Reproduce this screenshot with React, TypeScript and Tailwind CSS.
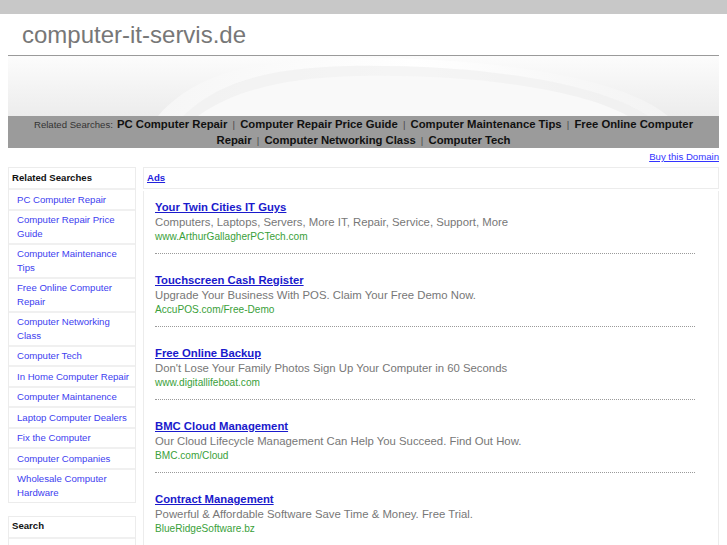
import React from "react";

const topLinks = [
  "PC Computer Repair",
  "Computer Repair Price Guide",
  "Computer Maintenance Tips",
  "Free Online Computer Repair",
  "Computer Networking Class",
  "Computer Tech",
];

const sideLinks = [
  "PC Computer Repair",
  "Computer Repair Price Guide",
  "Computer Maintenance Tips",
  "Free Online Computer Repair",
  "Computer Networking Class",
  "Computer Tech",
  "In Home Computer Repair",
  "Computer Maintanence",
  "Laptop Computer Dealers",
  "Fix the Computer",
  "Computer Companies",
  "Wholesale Computer Hardware",
];

const ads = [
  {
    title: "Your Twin Cities IT Guys",
    desc: "Computers, Laptops, Servers, More IT, Repair, Service, Support, More",
    url: "www.ArthurGallagherPCTech.com",
  },
  {
    title: "Touchscreen Cash Register",
    desc: "Upgrade Your Business With POS. Claim Your Free Demo Now.",
    url: "AccuPOS.com/Free-Demo",
  },
  {
    title: "Free Online Backup",
    desc: "Don't Lose Your Family Photos Sign Up Your Computer in 60 Seconds",
    url: "www.digitallifeboat.com",
  },
  {
    title: "BMC Cloud Management",
    desc: "Our Cloud Lifecycle Management Can Help You Succeed. Find Out How.",
    url: "BMC.com/Cloud",
  },
  {
    title: "Contract Management",
    desc: "Powerful & Affordable Software Save Time & Money. Free Trial.",
    url: "BlueRidgeSoftware.bz",
  },
];

function Banner() {
  return (
    <div className="h-[60px] bg-[#f3f3f3]">
      <svg width="100%" height="60" viewBox="0 0 711 60" preserveAspectRatio="none">
        <defs>
          <linearGradient id="bg" x1="0" y1="0" x2="0" y2="1">
            <stop offset="0" stopColor="#fcfcfc" />
            <stop offset="1" stopColor="#ececec" />
          </linearGradient>
          <linearGradient id="arc" x1="0" y1="0" x2="1" y2="0">
            <stop offset="0" stopColor="#f6f6f6" />
            <stop offset="0.5" stopColor="#ffffff" />
            <stop offset="1" stopColor="#f3f3f3" />
          </linearGradient>
        </defs>
        <rect width="711" height="60" fill="url(#bg)" />
        <path d="M150 60 C185 20 240 4 330 2 C470 0 610 18 660 60 Z" fill="url(#arc)" />
        <path d="M175 60 C210 26 260 12 340 10 C470 8 590 26 640 60 Z" fill="#efefef" opacity="0.6" />
        <path d="M190 60 C230 32 280 22 350 20 C460 18 570 32 620 60 Z" fill="#f9f9f9" />
      </svg>
    </div>
  );
}

export default function App() {
  return (
    <div className="min-h-screen bg-white font-['Liberation_Sans',Arial,sans-serif]">
      <div className="h-[14px] bg-[#c8c8c8]" />
      <div className="mx-2">
        {/* Header */}
        <div className="flex h-[42px] items-center border-b border-[#9a9a9a] pl-[14px] text-[24px] text-[#777]">
          computer-it-servis.de
        </div>
        <Banner />

        {/* Related searches bar */}
        <div className="h-[32px] overflow-hidden bg-[#9b9b9b] px-[16px] text-center text-[11.3px] leading-[16px] text-[#111]">
          <span className="mr-[4px] text-[9.6px] leading-none text-[#333]">Related Searches:</span>
          {topLinks.map((l, i) => (
            <React.Fragment key={l}>
              <a href="#" className="font-bold">
                {l}
              </a>
              {i < topLinks.length - 1 && (
                <>
                  {" "}
                  <span className="mx-[2px] text-[9.6px] leading-none text-[#4a4a4a]">|</span>{" "}
                </>
              )}
            </React.Fragment>
          ))}
        </div>

        <div className="mt-[3px] mb-[4px] text-right text-[9.6px] leading-[12px]">
          <a href="#" className="text-[#3333ff] underline">
            Buy this Domain
          </a>
        </div>

        <div className="flex gap-[7px]">
          {/* Sidebar */}
          <div className="w-[128px] shrink-0">
            <div className="border border-[#ececec]">
              <div className="flex h-[20px] items-center pl-[3px] text-[9.6px] font-bold text-[#111]">
                Related Searches
              </div>
              {sideLinks.map((l) => (
                <div
                  key={l}
                  className="border-t-2 border-[#f0f0f0] py-[2.5px] pl-[8px] pr-1 text-[9.6px] leading-[13.5px] text-[#4040f0]"
                >
                  {l}
                </div>
              ))}
            </div>
            <div className="mt-[13px] border border-[#ececec]">
              <div className="flex h-[20px] items-center pl-[3px] text-[9.6px] font-bold text-[#111]">
                Search
              </div>
              <div className="border-t-2 border-[#f0f0f0] px-2 py-2">
                <div className="h-[16px] border border-[#ccc]" />
              </div>
            </div>
          </div>

          {/* Main */}
          <div className="min-w-0 flex-1">
            <div className="flex h-[22px] items-center border border-[#ececec] pl-[3px] text-[9.6px] font-bold">
              <a href="#" className="text-[#2222dd] underline">
                Ads
              </a>
            </div>
            <div className="mt-[2px] flex min-h-[400px] flex-col gap-[18px] border-x border-[#ececec] pl-[11px] pr-[23px] pt-[8px]">
              {ads.map((a) => (
                <div key={a.title} className="border-b border-dotted border-[#9a9a9a] pb-[9px]">
                  <div className="text-[11.3px] font-bold leading-[16px]">
                    <a href="#" className="text-[#1a1acc] underline">
                      {a.title}
                    </a>
                  </div>
                  <div className="text-[11.35px] leading-[15px] text-[#777]">{a.desc}</div>
                  <div className="text-[10.1px] leading-[14px] text-[#3a9f3a]">{a.url}</div>
                </div>
              ))}
            </div>
          </div>
        </div>
      </div>
    </div>
  );
}
